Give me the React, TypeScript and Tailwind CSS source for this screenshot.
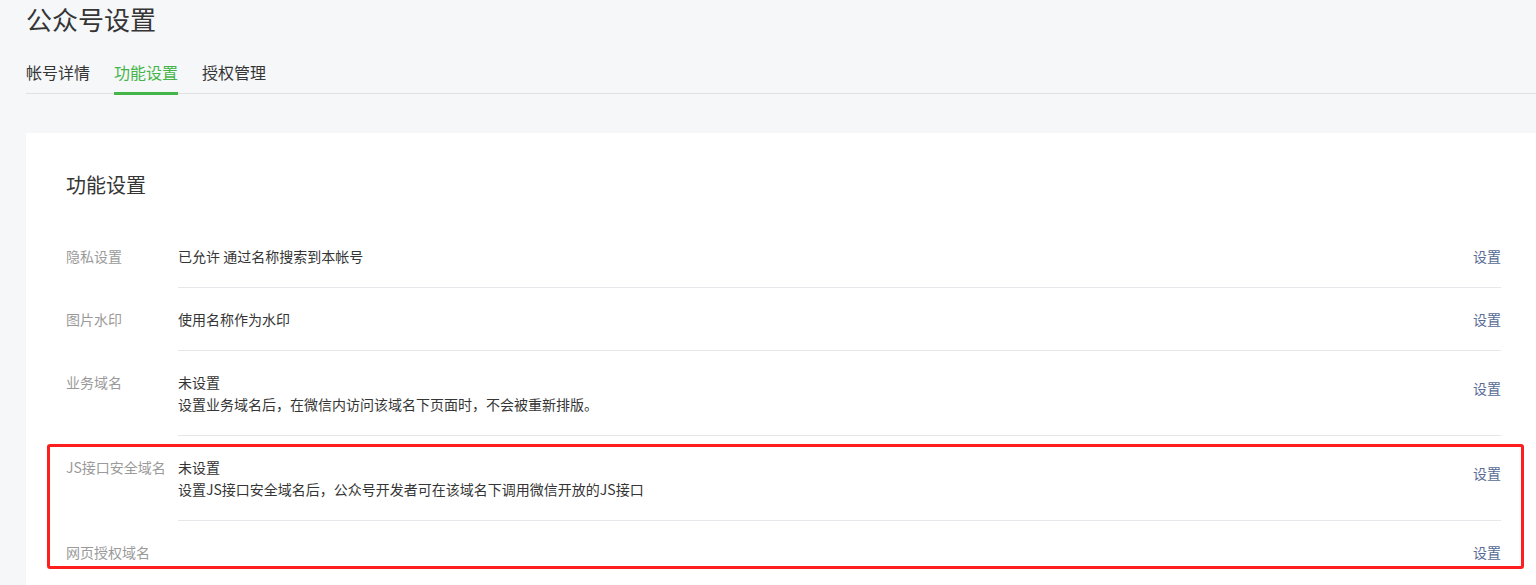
import React from 'react';

const font = { fontFamily: '"Noto Sans CJK SC", "Noto Sans", sans-serif' };

interface SettingRow {
    label: string;
    lines: string[];
    last?: boolean;
}

const rows: SettingRow[] = [
    { label: '隐私设置', lines: ['已允许 通过名称搜索到本帐号'] },
    { label: '图片水印', lines: ['使用名称作为水印'] },
    { label: '业务域名', lines: ['未设置', '设置业务域名后，在微信内访问该域名下页面时，不会被重新排版。'] },
    { label: 'JS接口安全域名', lines: ['未设置', '设置JS接口安全域名后，公众号开发者可在该域名下调用微信开放的JS接口'] },
    { label: '网页授权域名', lines: [], last: true },
];

function Row({ label, lines, last }: SettingRow) {
    const multi = lines.length > 1;
    return (
        <div className="flex text-[14px] leading-[22px]">
            <div className="w-[112px] shrink-0 pt-[20px] text-[#9a9a9a] whitespace-nowrap">{label}</div>
            <div
                className={`flex flex-1 justify-between pt-[20px] pb-[20px] ${last ? '' : 'border-b border-[#e7e7eb]'}`}
            >
                <div className="text-[#353535]">
                    {lines.map((l) => (
                        <div key={l}>{l}</div>
                    ))}
                </div>
                <a className={`text-[#576b95] ${multi ? 'mt-[6px]' : ''}`}>设置</a>
            </div>
        </div>
    );
}

export default function App() {
    return (
        <div className="relative min-h-[585px] overflow-hidden bg-[#f6f7f9]" style={font}>
            <div className="pl-[26px]">
                <h1 className="pt-[2px] text-[26px] leading-[34px] font-normal text-[#353535]">公众号设置</h1>
                <div className="mt-[25px] flex gap-[24px] border-b border-[#e0e1e4] text-[16px] leading-[22px] text-[#353535]">
                    <span className="pb-[10px]">帐号详情</span>
                    <span className="relative pb-[10px] text-[#44b549]">
                        功能设置
                        <span className="absolute left-0 right-0 -bottom-[2px] h-[3px] bg-[#44b549]" />
                    </span>
                    <span className="pb-[10px]">授权管理</span>
                </div>
                <div className="mt-[39px] rounded-tl-[2px] bg-white pl-[40px] pr-[35px] pt-[38px] pb-[20px] shadow-[0_1px_2px_rgba(0,0,0,0.03)]">
                    <h2 className="text-[20px] leading-[28px] font-normal text-[#353535]">功能设置</h2>
                    <div className="mt-[26px]">
                        {rows.map((r) => (
                            <Row key={r.label} {...r} />
                        ))}
                    </div>
                </div>
            </div>
            {/* annotation box */}
            <div className="absolute left-[47px] top-[444px] h-[125px] w-[1477px] rounded-[3px] border-[3px] border-[#ff1e1e]" />
        </div>
    );
}
